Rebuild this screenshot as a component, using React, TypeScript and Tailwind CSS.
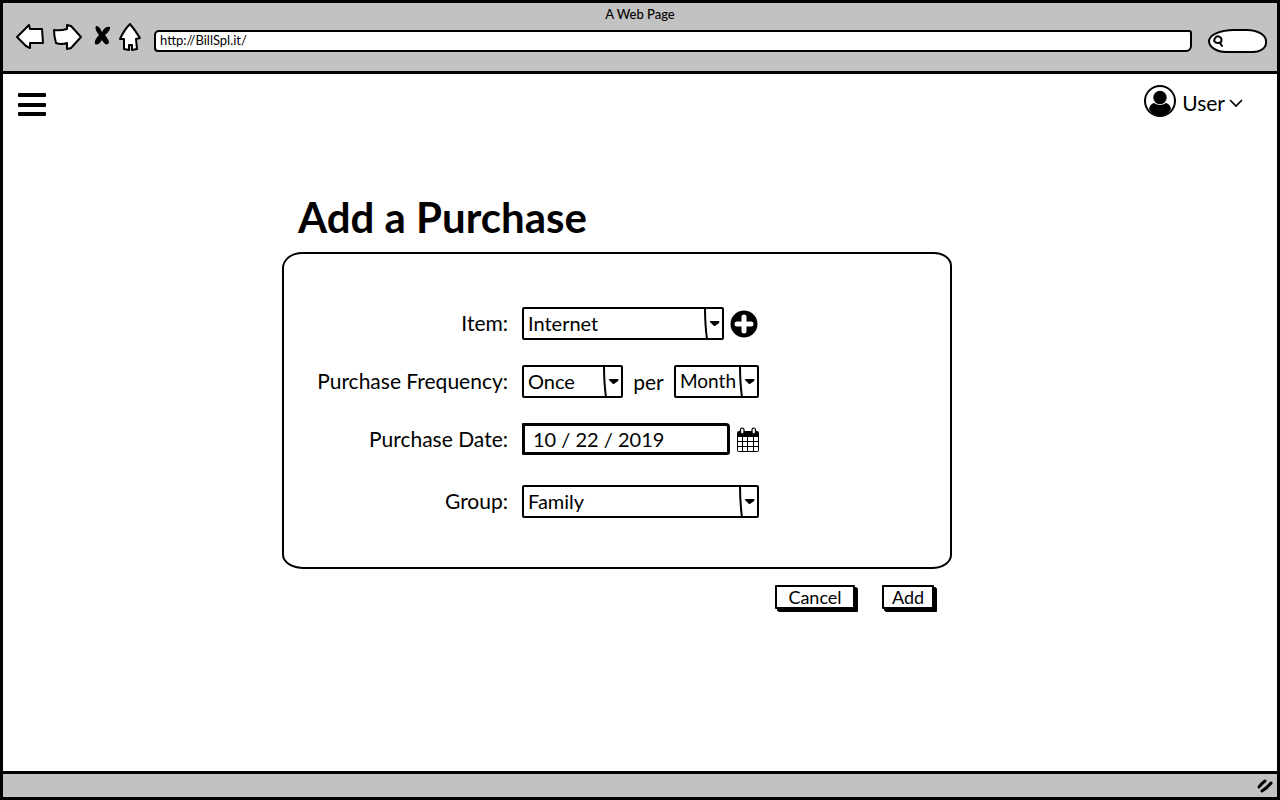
import React, { useState } from "react";

const ink = "fill-white stroke-black stroke-2";

function NavIcon({ label, children }: { label: string; children: React.ReactNode }) {
  return (
    <button type="button" aria-label={label} className="block shrink-0">
      {children}
    </button>
  );
}

function BrowserBar() {
  return (
    <header className="flex h-[71px] flex-col border-b-[3px] border-black bg-[#c2c2c2]">
      <div className="h-[18px] text-center text-[13px] leading-[22px] font-medium">A Web Page</div>
      <div className="flex items-center pr-2.5 pl-3">
        <NavIcon label="Back">
          <svg width="30" height="30" viewBox="0 0 30 30" className={ink} strokeLinejoin="round">
            <path d="M2 15 14 3 15 7 27 7 28 21 15 21 15 26 11 24Z" />
          </svg>
        </NavIcon>
        <div className="ml-1.5">
          <NavIcon label="Forward">
            <svg width="32" height="30" viewBox="0 0 32 30" className={ink} strokeLinejoin="round">
              <path d="M3 8Q9 9 16 7L16 3 20 4 30 15 20 26 16 27 16 21Q10 23 5 21Q3 14 3 8Z" />
            </svg>
          </NavIcon>
        </div>
        <div className="ml-2.5">
          <NavIcon label="Stop">
            <svg width="18" height="30" viewBox="0 0 18 30">
              <path d="M3 4Q6 3 9 10 12 4 17 5 18 8 12 13 16 18 16 21 13 25 9 18 5 24 2 22 1 18 6 13 1 7 3 4Z" />
            </svg>
          </NavIcon>
        </div>
        <div className="ml-[7px]">
          <NavIcon label="Home">
            <svg width="24" height="30" viewBox="0 0 24 30" className={ink} strokeLinejoin="round">
              <path d="M12 2Q17 8 22 16L18 17 19 27 14 28 14 23 11 23 11 28 6 27 6 17 2 17Q6 8 12 2Z" />
            </svg>
          </NavIcon>
        </div>
        <input
          aria-label="Address"
          defaultValue="http://BillSpl.it/"
          className="mt-2 ml-3 h-[22px] min-w-0 flex-1 rounded-[5px_3px_6px_4px] border-2 border-black bg-white px-1 pb-0.5 text-[13px] leading-4 outline-none"
        />
        <label className="mt-2 ml-4 flex h-6 w-[59px] items-center rounded-[26px_20px_14px_18px/12px_12px_10px_12px] border-2 border-black bg-white pl-0.5">
          <svg width="13" height="14" viewBox="0 0 13 14" fill="none" stroke="#000" strokeWidth="2" strokeLinecap="round" className="shrink-0">
            <path d="M9 4Q6 1 4 3 1 6 3 8 6 10 9 8 10 6 9 4ZM8 9 10 12" />
          </svg>
          <input aria-label="Search" className="w-8 min-w-0 bg-transparent outline-none" />
        </label>
      </div>
    </header>
  );
}

type PickerProps = { id: string; value: string; className: string; text?: string };

function Picker({ id, value, className, text = "text-[20px]" }: PickerProps) {
  return (
    <div className={`relative ${className}`}>
      <select
        id={id}
        aria-label={id}
        defaultValue={value}
        className={`block h-[33px] w-full appearance-none rounded-[2px] border-2 border-black bg-white pr-4 pb-0.5 pl-1 leading-7 outline-none ${text}`}
      >
        <option>{value}</option>
      </select>
      <svg width="20" height="33" viewBox="0 0 20 33" className="pointer-events-none absolute top-0 right-0">
        <path d="M1 1Q1 18 3 32" fill="none" stroke="#000" strokeWidth="2" />
        <path d="M6 14H15Q16 15 15 16L11 19H10L6 15Z" />
      </svg>
    </div>
  );
}

const labelClass = "text-right text-[21px] leading-8";
const buttonClass =
  "h-6 rounded-[1px] border-2 border-black bg-white text-[18px] leading-5 shadow-[2px_2px_0_#000,3px_3px_0_#000]";

export default function App() {
  const [date, setDate] = useState("10 / 22 / 2019");
  return (
    <div className="flex min-h-screen flex-col border-[3px] border-black bg-white font-['Lato','Noto_Sans',sans-serif] text-black">
      <BrowserBar />
      <nav className="flex items-start justify-between pt-[11px] pr-[34px] pl-[15px]">
        <button type="button" aria-label="Open menu" className="mt-2">
          <svg width="28" height="24" viewBox="0 0 28 24">
            <path d="M1 0H27Q28 0 28 1V3Q28 4 27 4H1Q0 4 0 3V1Q0 0 1 0ZM1 10H27Q28 10 28 11V13Q28 14 27 14H1Q0 14 0 13V11Q0 10 1 10ZM1 19H27Q28 19 28 20V22Q28 23 27 23H1Q0 23 0 22V20Q0 19 1 19Z" />
          </svg>
        </button>
        <button type="button" className="flex items-start gap-1.5 text-[21px] leading-8">
          <svg width="32" height="32" viewBox="0 0 32 32">
            <circle cx="16" cy="16" r="15" fill="none" stroke="#000" strokeWidth="2" />
            <circle cx="16" cy="12.5" r="6.7" />
            <path d="M5 24Q6 19 10 18 16 22 22 18 26 19 27 24 23 31 16 31 9 31 5 24Z" />
          </svg>
          <span className="flex items-center gap-1 pt-0.5">
            User
            <svg width="14" height="10" viewBox="0 0 14 10" fill="none" stroke="#000" strokeWidth="1.6">
              <path d="M1 2 7 8 13 2" />
            </svg>
          </span>
        </button>
      </nav>
      <main className="flex flex-1 flex-col items-center pt-[72px] pr-[46px]">
        <form className="w-full max-w-[670px]" onSubmit={(e) => e.preventDefault()}>
          <h1 className="pl-4 text-[42px] leading-[52px] font-bold">Add a Purchase</h1>
          <div className="mt-[9px] grid grid-cols-[192px_1fr] gap-x-3.5 gap-y-[25px] rounded-[20px_18px_20px_22px/16px_14px_14px_14px] border-2 border-black pt-[53px] pb-[49px] pl-8">
            <label htmlFor="Item" className={labelClass}>Item:</label>
            <div className="flex items-center gap-1.5">
              <Picker id="Item" value="Internet" className="w-[202px]" />
              <button type="button" aria-label="Add item">
                <svg width="28" height="28" viewBox="0 0 28 28">
                  <circle cx="14" cy="14" r="13.5" />
                  <path d="M14 7V21M7 14H21" stroke="#fff" strokeWidth="5" strokeLinecap="round" />
                </svg>
              </button>
            </div>
            <label htmlFor="Frequency" className={labelClass}>Purchase Frequency:</label>
            <div className="flex items-center">
              <Picker id="Frequency" value="Once" className="w-[101px]" />
              <span className="w-[51px] text-center text-[21px] leading-8">per</span>
              <Picker id="Period" value="Month" className="w-[85px]" text="text-[19px]" />
            </div>
            <label htmlFor="Date" className={labelClass}>Purchase Date:</label>
            <div className="flex h-[37px] items-start gap-1.5">
              <input
                id="Date"
                value={date}
                onChange={(e) => setDate(e.target.value)}
                className="h-8 w-[208px] rounded-[1px_4px_3px_1px] border-[3px] border-black px-2 text-[20px] leading-6 outline-none"
              />
              <button type="button" aria-label="Open calendar" className="pt-1">
                <svg width="24" height="26" viewBox="0 0 24 26">
                  <path d="M3 4H21Q23 4 23 6V23Q23 25 21 25H3Q1 25 1 23V6Q1 4 3 4Z" />
                  <path d="M2 10H6V14H2ZM7 10H11V14H7ZM12 10H17V14H12ZM18 10H22V14H18ZM2 15H6V19H2ZM7 15H11V19H7ZM12 15H17V19H12ZM18 15H22V19H18ZM2 20H6V24H2ZM7 20H11V24H7ZM12 20H17V24H12ZM18 20H22V24H18Z" fill="#fff" />
                  <rect x="4.5" y="1" width="3.5" height="6" rx="1.7" fill="#fff" stroke="#000" strokeWidth="1.2" />
                  <rect x="16" y="1" width="3.5" height="6" rx="1.7" fill="#fff" stroke="#000" strokeWidth="1.2" />
                </svg>
              </button>
            </div>
            <label htmlFor="Group" className={labelClass}>Group:</label>
            <Picker id="Group" value="Family" className="w-[237px]" />
          </div>
          <div className="mt-4 flex justify-end gap-[27px] pr-[18px]">
            <button type="button" className={`w-20 ${buttonClass}`}>Cancel</button>
            <button type="submit" className={`w-[52px] ${buttonClass}`}>Add</button>
          </div>
        </form>
      </main>
      <footer className="flex h-[26px] items-center justify-end border-t-[3px] border-black bg-[#c2c2c2] pr-1">
        <svg width="16" height="14" viewBox="0 0 16 14" fill="none" stroke="#000" strokeWidth="3" strokeLinecap="round">
          <path d="M2 8Q4 5 8 2M5 12Q10 9 14 4" />
        </svg>
      </footer>
    </div>
  );
}
